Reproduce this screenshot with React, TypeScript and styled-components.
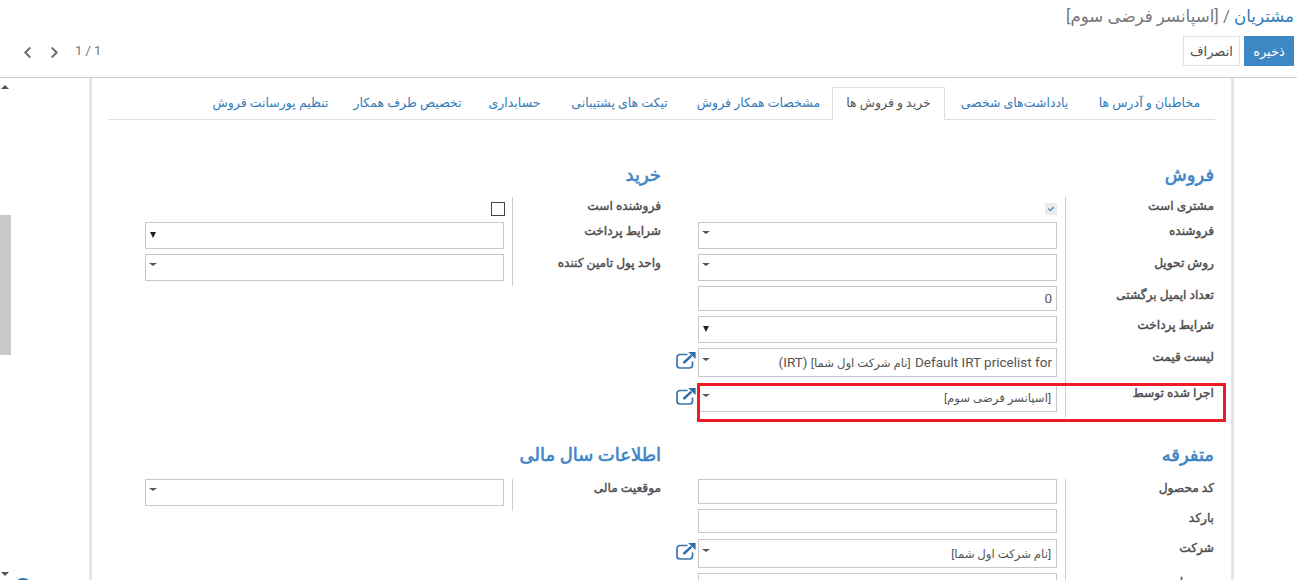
import React from "react";
import styled, { createGlobalStyle } from "styled-components";
import { FaChevronLeft, FaChevronRight, FaCheck } from "react-icons/fa";

const Global = createGlobalStyle`
  html, body { margin: 0; padding: 0; height: 580px; overflow: hidden; background: #fff; }
  body { font-family: "Roboto", "DejaVu Sans", sans-serif; font-size: 13px; color: #4c4c4c; }
  * { box-sizing: border-box; }
`;

const Page = styled.div`
  width: 1297px;
  height: 580px;
  overflow: hidden;
  display: flex;
  flex-direction: column;
`;

const Header = styled.header`
  height: 78px;
  flex: none;
  border-bottom: 1px solid #ccc;
  padding: 4px 3px 0 22px;
  display: flex;
  flex-direction: column;
`;

const Breadcrumb = styled.div`
  direction: rtl;
  height: 32px;
  font-size: 16.7px;
  line-height: 26px;
  color: #777;
  white-space: nowrap;
`;

const BreadcrumbLink = styled.span`
  color: #337ab7;
`;

const ControlBar = styled.div`
  display: flex;
  justify-content: space-between;
  align-items: center;
  height: 30px;
`;

const Pager = styled.div`
  display: flex;
  align-items: center;
  direction: ltr;
  color: #777;
  font-size: 13px;
  padding-top: 2px;
`;

const PagerArrow = styled.span`
  display: inline-flex;
  width: 11px;
  justify-content: center;
  color: #6f6f6f;
  margin-right: 16px;
  font-size: 13px;
`;

const PagerCount = styled.span`
  margin-bottom: 3px;
  margin-left: -1px;
`;

const ButtonGroup = styled.div`
  display: flex;
  direction: rtl;
  gap: 4px;
`;

const Button = styled.button<{ $primary?: boolean }>`
  height: 30px;
  width: ${(p) => (p.$primary ? "50px" : "57px")};
  padding: 0;
  font: 13px "Roboto", "DejaVu Sans", sans-serif;
  background: ${(p) => (p.$primary ? "#3c87c4" : "#fff")};
  color: ${(p) => (p.$primary ? "#fff" : "#4c4c4c")};
  border: 1px solid ${(p) => (p.$primary ? "#3c87c4" : "#dde1e6")};
`;

const Body = styled.div`
  flex: 1;
  display: flex;
  min-height: 0;
`;

const ScrollRail = styled.aside`
  width: 89px;
  flex: none;
  display: flex;
  flex-direction: column;
  align-items: flex-start;
  padding-top: 7px;
`;

const ScrollArrow = styled.span<{ $down?: boolean }>`
  width: 0;
  height: 0;
  flex: none;
  margin-left: 1px;
  border-left: 4px solid transparent;
  border-right: 4px solid transparent;
  ${(p) => (p.$down ? "border-top: 4px solid #555;" : "border-bottom: 4px solid #555;")}
`;

const ScrollThumb = styled.span`
  width: 11px;
  height: 140px;
  flex: none;
  margin: 126px 0 217px;
  background: #c8c8c8;
`;

const BottomRow = styled.div`
  display: flex;
  flex: none;
  align-items: flex-start;
`;

const RoundBadge = styled.span`
  width: 18px;
  height: 18px;
  flex: none;
  margin: 6px 0 0 5px;
  border: 2px solid #2f6da8;
  border-radius: 50%;
`;

const Sheet = styled.main`
  width: 1145px;
  flex: none;
  border-left: 3px solid #e6e6e6;
  border-right: 3px solid #e6e6e6;
  padding: 9px 16px 0 17px;
  direction: rtl;
`;

const Tabs = styled.nav`
  display: flex;
  height: 33px;
  border-bottom: 1px solid #ddd;
`;

const Tab = styled.div<{ $active?: boolean; $w: number }>`
  width: ${(p) => p.$w}px;
  flex: none;
  height: 33px;
  text-align: center;
  line-height: 30px;
  font-size: 12.5px;
  white-space: nowrap;
  color: ${(p) => (p.$active ? "#555" : "#337ab7")};
  border: 1px solid ${(p) => (p.$active ? "#ddd" : "transparent")};
  border-bottom-color: ${(p) => (p.$active ? "#fff" : "transparent")};
  background: ${(p) => (p.$active ? "#fff" : "transparent")};
`;

const Columns = styled.div<{ $top: number }>`
  display: grid;
  grid-template-columns: 539px 539px;
  column-gap: 14px;
  padding-top: ${(p) => p.$top}px;
`;

const Group = styled.section``;

const GroupTitle = styled.h2<{ $h: number }>`
  margin: 0;
  height: ${(p) => p.$h}px;
  padding-right: 1px;
  font-size: 18px;
  line-height: 22px;
  font-weight: 400;
  -webkit-text-stroke: 0.6px #3d86c6;
  color: #3d86c6;
`;

const Row = styled.div`
  display: flex;
  position: relative;
`;

const Label = styled.label`
  width: 149px;
  flex: none;
  padding-right: 1px;
  font-size: 12.2px;
  font-weight: 400;
  -webkit-text-stroke: 0.4px #4c4c4c;
  line-height: 18px;
  color: #4c4c4c;
`;

const ValueCell = styled.div<{ $gap: number }>`
  width: 390px;
  flex: none;
  display: flex;
  align-items: flex-start;
  border-right: 1px solid #ccc;
  padding-right: 8px;
  padding-bottom: ${(p) => p.$gap}px;
`;

const Input = styled.div<{ $h: number }>`
  width: 359px;
  height: ${(p) => p.$h}px;
  flex: none;
  display: flex;
  align-items: center;
  justify-content: space-between;
  border: 1px solid #c8c8c8;
  padding: 0 4px 2px 4px;
  background: #fff;
  font-size: 13.5px;
  color: #555;
  white-space: nowrap;
`;

const ArabicRun = styled.span`
  font-size: 11.7px;
  padding-right: 1px;
`;

const Caret = styled.span<{ $dark?: boolean }>`
  width: 0;
  height: 0;
  margin-bottom: ${(p) => (p.$dark ? "0" : "4px")};
  margin-left: ${(p) => (p.$dark ? "0" : "-1px")};
  border-left: ${(p) => (p.$dark ? 3 : 4)}px solid transparent;
  border-right: ${(p) => (p.$dark ? 3 : 4)}px solid transparent;
  border-top: ${(p) => (p.$dark ? "6px solid #222" : "3px solid #555")};
`;

const OpenLink = styled.span`
  width: 22px;
  flex: none;
  display: flex;
  justify-content: center;
  padding-top: 4px;
  padding-right: 2px;
`;

const CheckCell = styled.div`
  height: 25px;
  display: flex;
  align-items: center;
`;

const CheckedBox = styled.span`
  width: 12px;
  height: 12px;
  display: flex;
  align-items: center;
  justify-content: center;
  background: #e9ecef;
  color: #4a7fbd;
  font-size: 6px;
  margin-top: -1px;
`;

const EmptyBox = styled.span`
  width: 14px;
  height: 14px;
  border: 1px solid #444;
  margin-right: -1px;
  margin-top: -1px;
  background: #fff;
`;

const Highlight = styled.div`
  position: absolute;
  left: 21px;
  right: -11px;
  top: -1px;
  bottom: -4px;
  border: 3px solid #ed1c24;
  pointer-events: none;
`;

const OpenIcon = () => (
  <svg width="20" height="17" viewBox="0 0 20 17" fill="none">
    <path
      d="M11.5 2.5H4a3 3 0 0 0-3 3V13a3 3 0 0 0 3 3h9.5a3 3 0 0 0 3-3V9.5"
      stroke="#3a74ad"
      strokeWidth="1.7"
    />
    <path d="M7.5 11 15.5 3.6" stroke="#2f6da8" strokeWidth="2.4" />
    <path d="M12.2 0H19.6V7Z" fill="#2f6da8" />
  </svg>
);

type FieldProps = {
  label: string;
  gap: number;
  h?: number;
  caret?: "dark" | "light";
  link?: boolean;
  children?: React.ReactNode;
  control?: React.ReactNode;
  marked?: boolean;
};

function Field({ label, gap, h, caret, link, children, control, marked }: FieldProps) {
  return (
    <Row>
      <Label>{label}</Label>
      <ValueCell $gap={gap}>
        {control ?? (
          <>
            <Input $h={h ?? 27}>
              <span>{children}</span>
              {caret && <Caret $dark={caret === "dark"} />}
            </Input>
            {link && (
              <OpenLink>
                <OpenIcon />
              </OpenLink>
            )}
          </>
        )}
      </ValueCell>
      {marked && <Highlight />}
    </Row>
  );
}

const tabs = [
  { label: "مخاطبان و آدرس ها", width: 131 },
  { label: "یادداشت‌های شخصی", width: 139 },
  { label: "خرید و فروش ها", width: 113 },
  { label: "مشخصات همکار فروش", width: 147 },
  { label: "تیکت های پشتیبانی", width: 131 },
  { label: "حسابداری", width: 79 },
  { label: "تخصیص طرف همکار", width: 135 },
  { label: "تنظیم پورسانت فروش", width: 139 },
];

export default function App() {
  return (
    <Page>
      <Global />
      <Header>
        <Breadcrumb>
          <BreadcrumbLink>مشتریان</BreadcrumbLink> / [اسپانسر فرضی سوم]
        </Breadcrumb>
        <ControlBar>
          <Pager>
            <PagerArrow><FaChevronLeft /></PagerArrow>
            <PagerArrow><FaChevronRight /></PagerArrow>
            <PagerCount>1 / 1</PagerCount>
          </Pager>
          <ButtonGroup>
            <Button $primary>ذخیره</Button>
            <Button>انصراف</Button>
          </ButtonGroup>
        </ControlBar>
      </Header>
      <Body>
        <ScrollRail>
          <ScrollArrow />
          <ScrollThumb />
          <BottomRow>
            <ScrollArrow $down />
            <RoundBadge />
          </BottomRow>
        </ScrollRail>
        <Sheet>
          <Tabs>
            {tabs.map((t, i) => (
              <Tab key={t.label} $w={t.width} $active={i === 2}>{t.label}</Tab>
            ))}
          </Tabs>
          <Columns $top={44}>
            <Group>
              <GroupTitle $h={33}>فروش</GroupTitle>
              <Field
                label="مشتری است"
                gap={0}
                control={<CheckCell><CheckedBox><FaCheck /></CheckedBox></CheckCell>}
              />
              <Field label="فروشنده" gap={5} caret="light" />
              <Field label="روش تحویل" gap={5} caret="light" />
              <Field label="تعداد ایمیل برگشتی" gap={5} h={25}>0</Field>
              <Field label="شرایط پرداخت" gap={5} caret="dark" />
              <Field label="لیست قیمت" gap={7} h={29} caret="light" link>
                Default IRT pricelist for <ArabicRun>[نام شرکت اول شما]</ArabicRun> (IRT)
              </Field>
              <Field label="اجرا شده توسط" gap={6} h={28} caret="light" link marked>
                <ArabicRun>[اسپانسر فرضی سوم]</ArabicRun>
              </Field>
            </Group>
            <Group>
              <GroupTitle $h={33}>خرید</GroupTitle>
              <Field
                label="فروشنده است"
                gap={0}
                control={<CheckCell><EmptyBox /></CheckCell>}
              />
              <Field label="شرایط پرداخت" gap={5} caret="dark" />
              <Field label="واحد پول تامین کننده" gap={5} caret="light" />
            </Group>
          </Columns>
          <Columns $top={26}>
            <Group>
              <GroupTitle $h={35}>متفرقه</GroupTitle>
              <Field label="کد محصول" gap={5} h={25} />
              <Field label="بارکد" gap={6} h={24} />
              <Field label="شرکت" gap={5} h={29} caret="light" link>
                <ArabicRun>[نام شرکت اول شما]</ArabicRun>
              </Field>
              <Field label="وب سایت" gap={5} h={27} />
            </Group>
            <Group>
              <GroupTitle $h={35}>اطلاعات سال مالی</GroupTitle>
              <Field label="موقعیت مالی" gap={5} caret="light" />
            </Group>
          </Columns>
        </Sheet>
      </Body>
    </Page>
  );
}
